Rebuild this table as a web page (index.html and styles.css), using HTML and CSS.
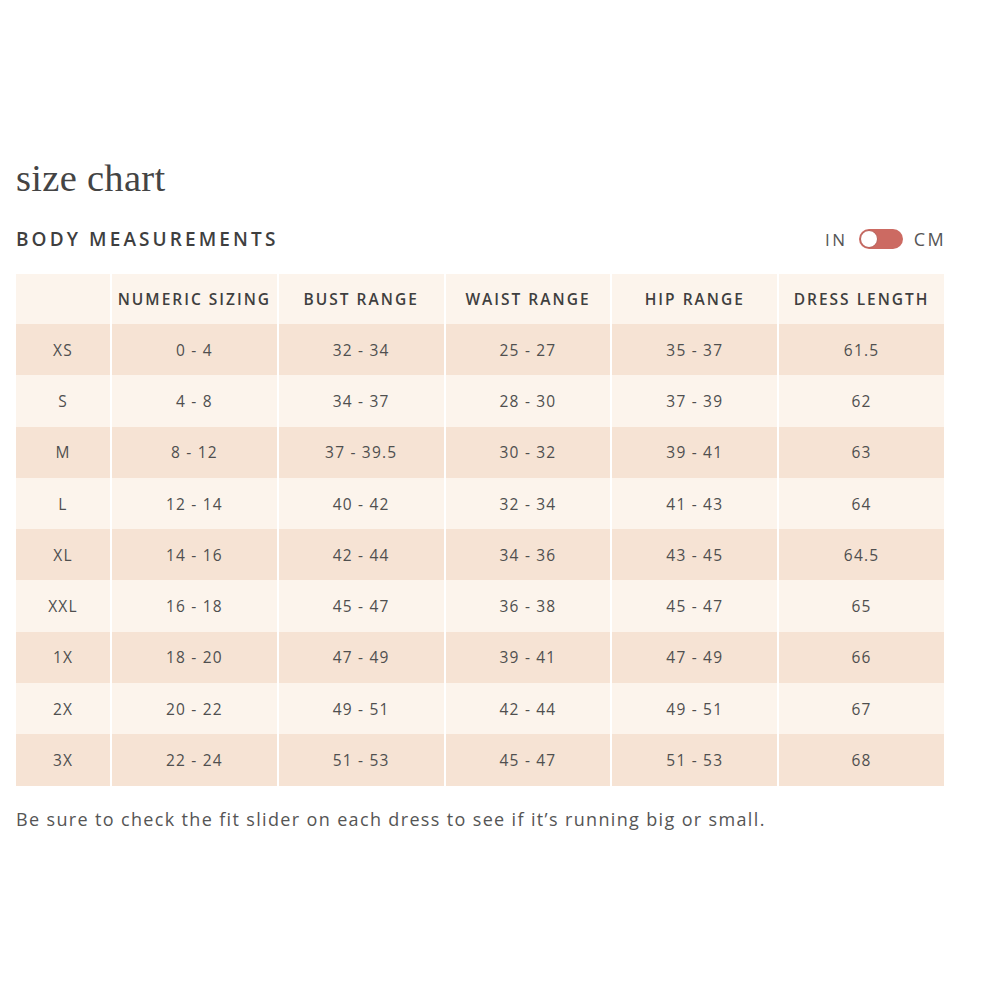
FILE: index.html
```html
<!DOCTYPE html>
<html>
<head>
<meta charset="utf-8">
<link rel="stylesheet" href="styles.css">
</head>
<body>
<div class="page">
  <h1 class="title">size chart</h1>
  <div class="bar">
    <h2 class="subtitle">BODY MEASUREMENTS</h2>
    <div class="units">
      <span class="unit">IN</span>
      <span class="toggle"><span class="knob"></span></span>
      <span class="unit">CM</span>
    </div>
  </div>
  <div class="table">
    <div class="cell head"></div>
    <div class="cell head">NUMERIC SIZING</div>
    <div class="cell head">BUST RANGE</div>
    <div class="cell head">WAIST RANGE</div>
    <div class="cell head">HIP RANGE</div>
    <div class="cell head">DRESS LENGTH</div>

    <div class="cell dark">XS</div><div class="cell dark">0 - 4</div><div class="cell dark">32 - 34</div><div class="cell dark">25 - 27</div><div class="cell dark">35 - 37</div><div class="cell dark">61.5</div>
    <div class="cell light">S</div><div class="cell light">4 - 8</div><div class="cell light">34 - 37</div><div class="cell light">28 - 30</div><div class="cell light">37 - 39</div><div class="cell light">62</div>
    <div class="cell dark">M</div><div class="cell dark">8 - 12</div><div class="cell dark">37 - 39.5</div><div class="cell dark">30 - 32</div><div class="cell dark">39 - 41</div><div class="cell dark">63</div>
    <div class="cell light">L</div><div class="cell light">12 - 14</div><div class="cell light">40 - 42</div><div class="cell light">32 - 34</div><div class="cell light">41 - 43</div><div class="cell light">64</div>
    <div class="cell dark">XL</div><div class="cell dark">14 - 16</div><div class="cell dark">42 - 44</div><div class="cell dark">34 - 36</div><div class="cell dark">43 - 45</div><div class="cell dark">64.5</div>
    <div class="cell light">XXL</div><div class="cell light">16 - 18</div><div class="cell light">45 - 47</div><div class="cell light">36 - 38</div><div class="cell light">45 - 47</div><div class="cell light">65</div>
    <div class="cell dark">1X</div><div class="cell dark">18 - 20</div><div class="cell dark">47 - 49</div><div class="cell dark">39 - 41</div><div class="cell dark">47 - 49</div><div class="cell dark">66</div>
    <div class="cell light">2X</div><div class="cell light">20 - 22</div><div class="cell light">49 - 51</div><div class="cell light">42 - 44</div><div class="cell light">49 - 51</div><div class="cell light">67</div>
    <div class="cell dark">3X</div><div class="cell dark">22 - 24</div><div class="cell dark">51 - 53</div><div class="cell dark">45 - 47</div><div class="cell dark">51 - 53</div><div class="cell dark">68</div>
  </div>
  <p class="note">Be sure to check the fit slider on each dress to see if it’s running big or small.</p>
</div>
</body>
</html>
```
FILE: styles.css
```css
html, body {
  margin: 0;
  padding: 0;
  background: #ffffff;
}
.page {
  width: 928px;
  padding: 156px 0 0 16px;
  font-family: "Open Sans", "Noto Sans", sans-serif;
  color: #4a4a4a;
}
.title {
  margin: 0;
  font-family: "Liberation Serif", serif;
  font-weight: normal;
  font-size: 38.5px;
  line-height: 44px;
  color: #444;
  letter-spacing: 0.3px;
}
.bar {
  display: flex;
  align-items: center;
  justify-content: space-between;
  margin-top: 22px;
  height: 34px;
}
.subtitle {
  margin: 0;
  font-size: 19px;
  font-weight: 600;
  letter-spacing: 3.1px;
  color: #3f3f3f;
}
.units {
  display: flex;
  align-items: center;
  gap: 11px;
}
.unit {
  font-size: 17px;
  letter-spacing: 2.6px;
  color: #555;
}
.unit:last-child {
  font-size: 18px;
  letter-spacing: 2.4px;
  margin-right: -2px;
}
.toggle {
  position: relative;
  display: inline-block;
  width: 44px;
  height: 20px;
  border-radius: 10px;
  background: #cc6a62;
}
.knob {
  position: absolute;
  left: 1px;
  top: 1px;
  width: 16px;
  height: 16px;
  border-radius: 50%;
  background: #fff;
  border: 1px solid #b86059;
}
.table {
  display: grid;
  grid-template-columns: 94px repeat(5, 1fr);
  grid-template-rows: 50px;
  grid-auto-rows: 51.3px;
  column-gap: 2px;
  margin-top: 18px;
}
.cell {
  display: flex;
  align-items: center;
  justify-content: center;
  font-size: 15.5px;
  letter-spacing: 1.2px;
  color: #4f4f4f;
}
.head {
  background: #fcf4ec;
  font-weight: 600;
  font-size: 15.5px;
  letter-spacing: 2px;
  color: #3f3f3f;
}
.dark {
  background: #f6e3d4;
}
.light {
  background: #fcf4ec;
}
.note {
  margin: 21px 0 0;
  font-size: 18px;
  letter-spacing: 1.35px;
  color: #555;
}
```
